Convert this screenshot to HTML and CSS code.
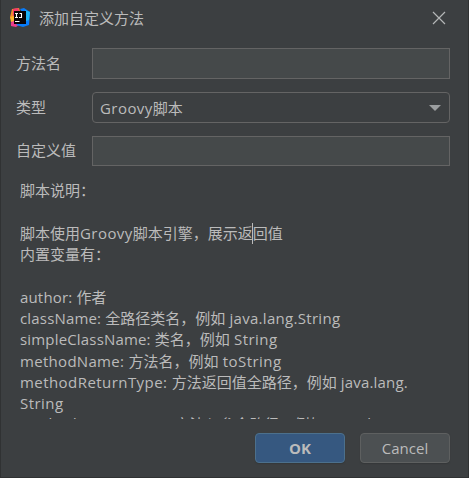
FILE: index.html
```html
<!DOCTYPE html>
<html lang="zh-CN">
<head>
<meta charset="utf-8">
<title>添加自定义方法</title>
<link rel="stylesheet" href="styles.css">
</head>
<body>
<main class="dialog">
  <header class="titlebar">
    <svg class="logo" width="20" height="20" viewBox="0 0 20 20">
      <path d="M2 1 9 0 12 9 2 14 0 9Z" fill="#f58a2c"/>
      <path d="M3 1 8 0 10 5 3 8Z" fill="#f5386b"/>
      <path d="M1 15 3 9 9 17 6 19 1 18Z" fill="#ed3d8c"/>
      <path d="M0 9 4 8 4 13 1 14Z" fill="#f9b52c"/>
      <path d="M10 1 14 0 20 4 19 17 13 19 6 17 15 8Z" fill="#087cfa"/>
      <path d="M15 2 20 4 19 12 16 13Z" fill="#1cb4f5"/>
      <path d="M4 3H16V16H4Z" fill="#080405"/>
      <path d="M5 5.5H8M6.5 5.5V9.5M5 9.5H8M9.5 5.5H12M11.5 5.5V9.5H9M5 13.5H9.5" fill="none" stroke="#fff" stroke-width="1.1"/>
    </svg>
    <h1 class="title">添加自定义方法</h1>
    <svg class="close" width="14" height="14" viewBox="0 0 14 14"><path d="M1 1 13 13M13 1 1 13" stroke="#b4b6b7" stroke-width="1.2"/></svg>
  </header>
  <form class="fields">
    <label class="label">方法名</label><div class="input"></div>
    <label class="label">类型</label>
    <div class="select"><span><span class="wide">Groovy</span>脚本</span><svg width="12" height="6" viewBox="0 0 12 6"><path d="M0 0H12L6 6Z" fill="#9b9ea0"/></svg></div>
    <label class="label">自定义值</label><div class="input"></div>
  </form>
  <section class="help">
    <p>脚本说明：</p>
    <p></p>
    <p>脚本使用<span class="wide">Groovy</span>脚本引擎，展示返<span class="caret"></span>回值</p>
    <p>内置变量有：</p>
    <p></p>
    <p><span class="snug">author: </span>作者</p>
    <p><span class="snug">className: </span>全路径类名，例如<span class="medium"> java.lang.String</span></p>
    <p><span class="snug">simpleClassName: </span>类名，例如<span class="wide"> String</span></p>
    <p><span class="medium">methodName: </span>方法名，例如<span class="wide"> toString</span></p>
    <p><span class="wide">methodReturnType: </span>方法返回值全路径，例如<span class="snug"> java.lang.</span></p>
    <p><span class="wide">String</span></p>
    <p class="last"><span class="medium">methodParamTypes: </span>方法入参全路径，例如<span class="medium"> [java.lang.</span></p>
  </section>
  <footer class="actions"><button class="button primary">OK</button><button class="button">Cancel</button></footer>
</main>
</body>
</html>
```
FILE: styles.css
```css
* { box-sizing: border-box; }
body {
  margin: 0;
  width: 469px;
  height: 478px;
  overflow: hidden;
  background: #303233;
  color: #bbbbbb;
  font: 15px/20px "Open Sans", "Noto Sans CJK SC", sans-serif;
}
.dialog {
  width: 467px;
  height: 477px;
  margin-left: 1px;
  background: #3c3f41;
}
.titlebar {
  display: flex;
  align-items: center;
  height: 36px;
  padding: 0 22px 0 9px;
}
.logo { margin: 0 9px 0 0; }
.title { margin: 0 0 1px; font-size: 15px; font-weight: 400; }
.close { margin-left: auto; }
.fields {
  display: grid;
  grid-template-columns: 76px 358px;
  grid-template-rows: 31px 31px 30px;
  row-gap: 13px;
  padding: 12px 0 0 15px;
  align-items: center;
}
.label { margin-bottom: 2px; }
.snug { letter-spacing: 0.17px; }
.medium { letter-spacing: 0.3px; }
.wide { letter-spacing: 0.44px; }
.input { height: 100%; border: 1px solid #646464; background: #45494a; }
.select {
  display: flex;
  align-items: center;
  justify-content: space-between;
  height: 100%;
  padding: 0 8px 0 7px;
  border: 1px solid #646464;
  border-radius: 4px;
}
.help {
  height: 239px;
  margin: 14px 15px 0 19px;
  overflow: hidden;
  line-height: 21.33px;
}
.help p { margin: 0; height: 21.33px; white-space: pre; }
.help .last { margin-top: -1px; }
.last span { vertical-align: 1px; line-height: 18px; }
.caret {
  display: inline-block;
  width: 1px;
  height: 21px;
  margin-left: -1px;
  vertical-align: top;
  background: #bbbbbb;
}
.actions {
  display: flex;
  justify-content: flex-end;
  gap: 15px;
  padding: 14px 18px 0 0;
}
.button {
  width: 90px;
  height: 30px;
  padding: 0;
  border: 1px solid #5e6060;
  border-radius: 4px;
  background: #4c5052;
  color: #bbbbbb;
  font: 15px/20px "Open Sans", sans-serif;
  box-shadow: 0 1px 1px #35383a;
}
.primary { border-color: #4c708c; background: #365880; font-weight: 700; }
```
